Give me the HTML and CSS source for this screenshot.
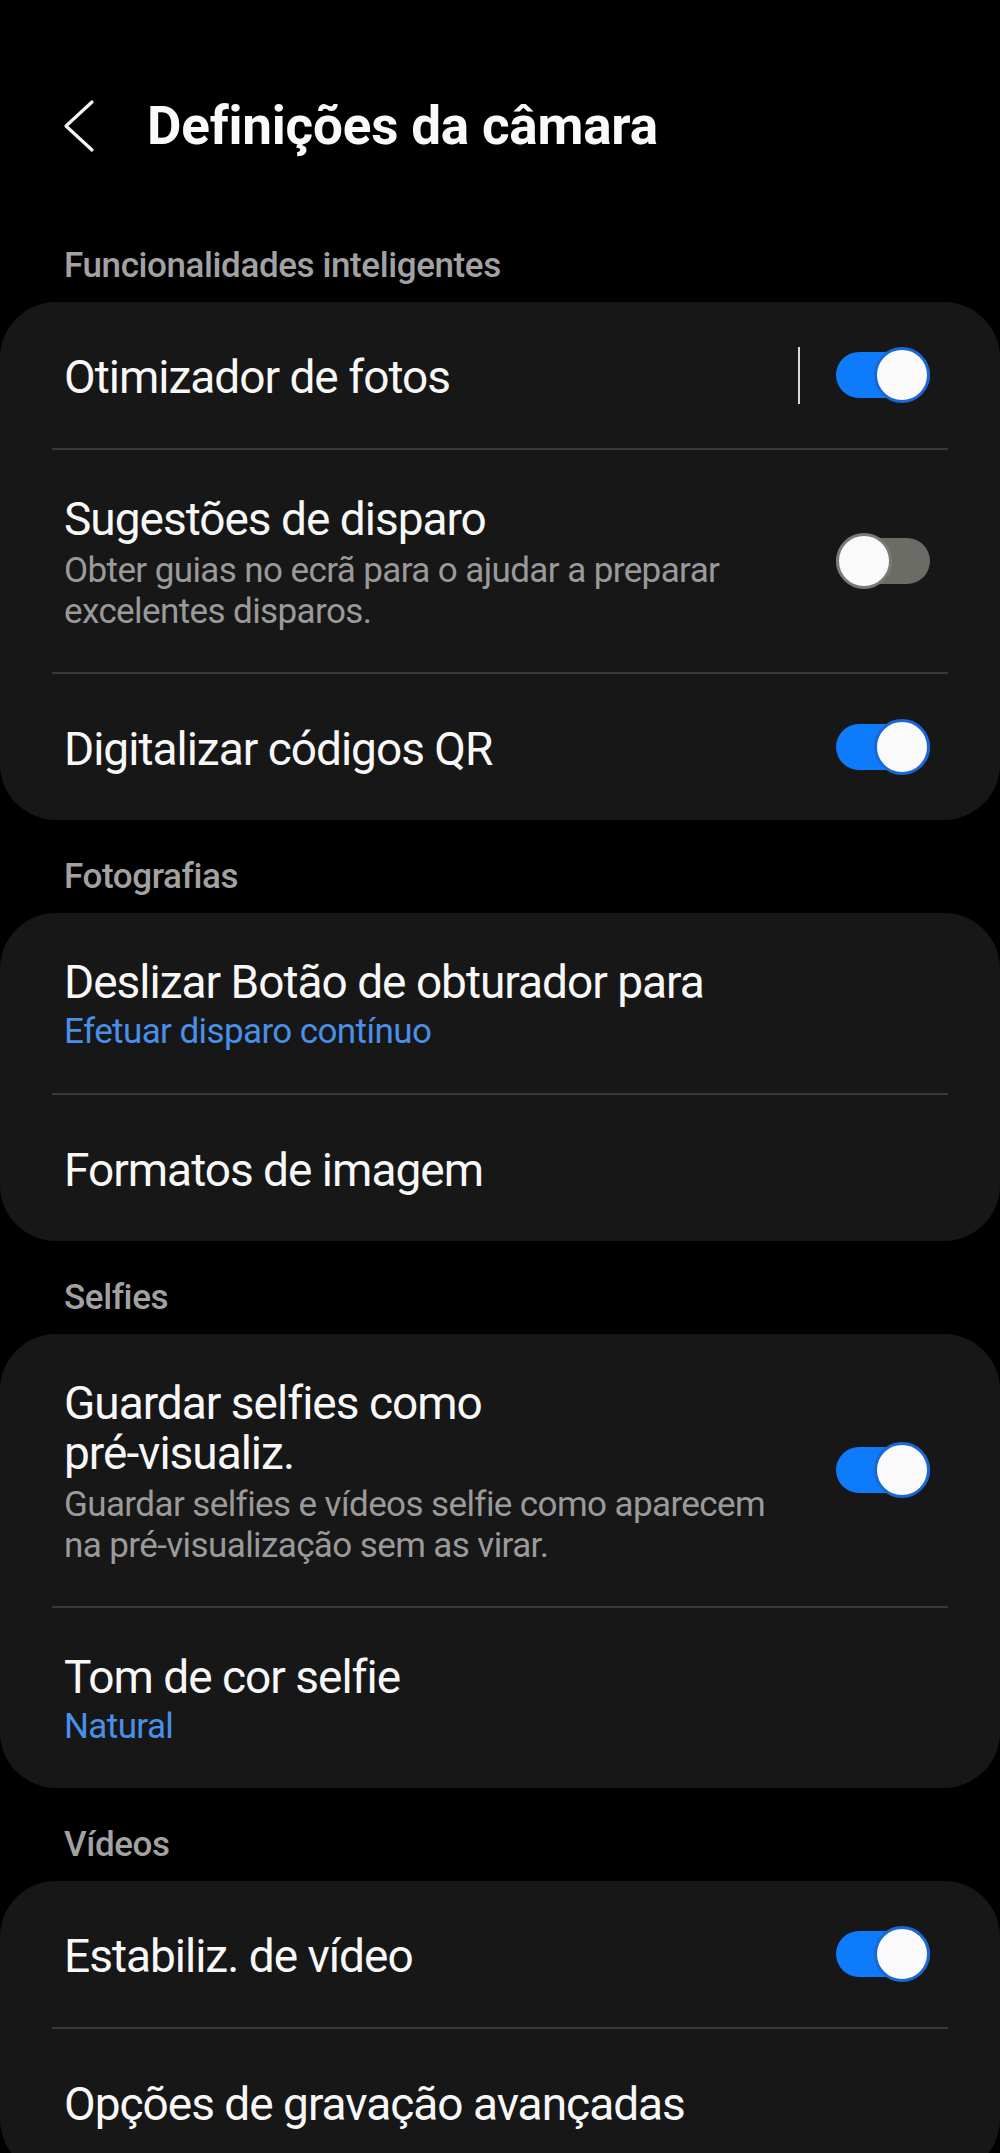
FILE: index.html
```html
<!DOCTYPE html>
<html lang="pt">
  <head>
    <meta charset="UTF-8" />
    <meta name="viewport" content="width=device-width, initial-scale=1.0" />
    <title>Definições da câmara</title>
    <link rel="stylesheet" href="styles.css">
  </head>
  <body>
    <div class="screen">
      <div class="appbar">
        <button class="back" aria-label="Voltar">
          <svg width="40" height="56" viewBox="0 0 40 56">
            <polyline points="30,4 4,28 30,52" fill="none" stroke="#f5f5f5" stroke-width="3.2" stroke-linecap="round" stroke-linejoin="round" />
          </svg>
        </button>
        <h1>Definições da câmara</h1>
      </div>

      <div class="section-title">Funcionalidades inteligentes</div>
      <div class="card">
        <div class="row">
          <div class="text">
            <div class="label">Otimizador de fotos</div>
          </div>
          <div class="vbar"></div>
          <div class="switch on"><div class="knob"></div></div>
        </div>
        <div class="divider"></div>
        <div class="row">
          <div class="text">
            <div class="label">Sugestões de disparo</div>
            <div class="desc">Obter guias no ecrã para o ajudar a preparar excelentes disparos.</div>
          </div>
          <div class="switch off"><div class="knob"></div></div>
        </div>
        <div class="divider"></div>
        <div class="row">
          <div class="text">
            <div class="label">Digitalizar códigos QR</div>
          </div>
          <div class="switch on"><div class="knob"></div></div>
        </div>
      </div>

      <div class="section-title">Fotografias</div>
      <div class="card">
        <div class="row">
          <div class="text">
            <div class="label">Deslizar Botão de obturador para</div>
            <div class="value">Efetuar disparo contínuo</div>
          </div>
        </div>
        <div class="divider"></div>
        <div class="row">
          <div class="text">
            <div class="label">Formatos de imagem</div>
          </div>
        </div>
      </div>

      <div class="section-title">Selfies</div>
      <div class="card">
        <div class="row">
          <div class="text narrow">
            <div class="label">Guardar selfies como pré-visualiz.</div>
            <div class="desc">Guardar selfies e vídeos selfie como aparecem na pré-visualização sem as virar.</div>
          </div>
          <div class="switch on"><div class="knob"></div></div>
        </div>
        <div class="divider"></div>
        <div class="row">
          <div class="text">
            <div class="label">Tom de cor selfie</div>
            <div class="value">Natural</div>
          </div>
        </div>
      </div>

      <div class="section-title">Vídeos</div>
      <div class="card">
        <div class="row">
          <div class="text">
            <div class="label">Estabiliz. de vídeo</div>
          </div>
          <div class="switch on"><div class="knob"></div></div>
        </div>
        <div class="divider"></div>
        <div class="row">
          <div class="text">
            <div class="label">Opções de gravação avançadas</div>
          </div>
        </div>
      </div>
    </div>
  </body>
</html>
```

FILE: styles.css
```css
html,
body {
  margin: 0;
  padding: 0;
  height: 100%;
  overflow: hidden;
  background-color: #000;
  font-family: Roboto, "Noto Sans", sans-serif;
  color: #f7f7f7;
}

.screen {
  width: 1000px;
}

.appbar {
  display: flex;
  align-items: center;
  height: 80px;
  margin: 86px 0 43px;
}

.back {
  display: flex;
  align-items: center;
  justify-content: center;
  width: 40px;
  height: 56px;
  margin-left: 62px;
  padding: 0;
  border: none;
  background: none;
}

.appbar h1 {
  margin: 0 0 0 45px;
  font-size: 53px;
  font-weight: 700;
  letter-spacing: -0.2px;
  color: #fafafa;
}

.section-title {
  padding: 40px 64px 19px;
  line-height: 34px;
  font-size: 35px;
  font-weight: 500;
  letter-spacing: -0.4px;
  color: #a2a2a2;
}

.card {
  background: #171717;
  border-radius: 56px;
}

.row {
  display: flex;
  align-items: center;
  min-height: 146px;
  padding: 0 70px 0 64px;
  box-sizing: border-box;
}

.text {
  flex: 1;
  padding: 44px 0 40px;
}

.text.narrow .label {
  width: 440px;
}

.label {
  font-size: 46px;
  line-height: 50px;
  letter-spacing: -1px;
  color: #f7f7f7;
}

.desc {
  margin-top: 6px;
  max-width: 720px;
  font-size: 35px;
  line-height: 41px;
  letter-spacing: -0.6px;
  color: #9a9a9a;
}

.value {
  margin-top: 4px;
  font-size: 35px;
  line-height: 42px;
  letter-spacing: -0.6px;
  color: #4a8fe8;
}

.divider {
  height: 2px;
  margin: 0 52px;
  background: #3a3a3a;
}

.vbar {
  width: 2px;
  height: 57px;
  margin-right: 36px;
  background: #d8d8d8;
}

.switch {
  display: flex;
  align-items: center;
  flex-shrink: 0;
  width: 94px;
  height: 46px;
  border-radius: 23px;
}

.switch.on {
  justify-content: flex-end;
  background: #0d7bfa;
}

.switch.off {
  justify-content: flex-start;
  background: #6c6c66;
}

.knob {
  width: 50px;
  height: 50px;
  margin: -5px 0;
  border-radius: 50%;
  background: #fafafa;
}

.switch.on .knob {
  border: 3px solid #1868d6;
}

.switch.off .knob {
  border: 3px solid #7a7a74;
}
```
